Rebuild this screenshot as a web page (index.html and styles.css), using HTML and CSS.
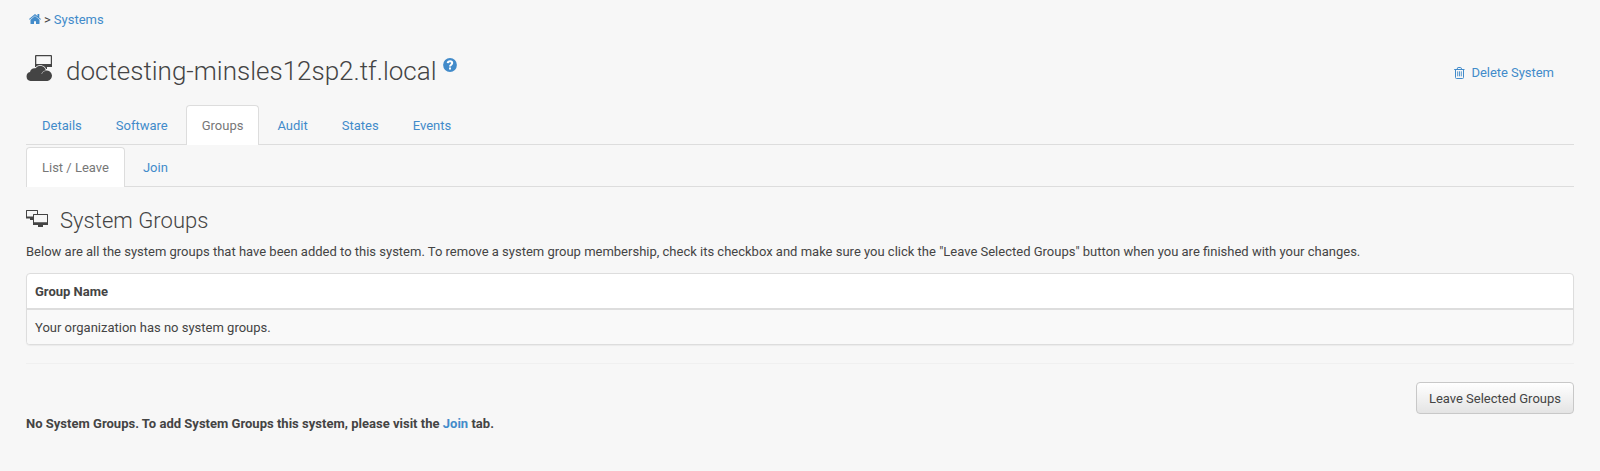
FILE: index.html
```
<!DOCTYPE html>
<html lang="en"><head><meta charset="utf-8"><title>System Groups</title><link rel="stylesheet" href="styles.css"></head>
<body>
<nav class="crumbs"><a href="#" class="home"><svg width="12" height="10" viewBox="0 0 12 10"><path d="M6 0 0 5.100l.6.7L6 1.400l5.400 4.400.6-.7-1.700-1.400V0H8.500v2.100zM6 2.100 1.500 5.800v3.700q0 .5.500.5h3V7.200h2V10h3q.5 0 .5-.5V5.800z" fill="currentColor"/></svg></a><span>&gt;</span><a href="#">Systems</a></nav>
<header class="head">
<svg class="sysicon" width="26" height="26" viewBox="0 0 26 26"><path d="M10 0h15q1 0 1 1v11H9V1q0-1 1-1zM10.300 1.200v7.800h14.500V1.200zM14 12h7v2h-7z" fill="#444" fill-rule="evenodd"/><path d="M4.500 26A4.600 4.600 0 0 1 4 17 5 5 0 0 1 9.500 13.300 5.700 5.700 0 0 1 19.800 15.500 5.200 5.200 0 0 1 21.500 26z" fill="#444" stroke="#f7f7f7" stroke-width="1.400" paint-order="stroke"/><path d="M15.500 19q1-3 4.300-3.500" fill="none" stroke="#ccc" stroke-width=".6"/></svg>
<h1>doctesting-minsles12sp2.tf.local</h1>
<svg class="help" width="14" height="14" viewBox="0 0 14 14"><circle cx="7" cy="7" r="6.900" fill="#428bca"/><path d="M4.700 5.200C5 2.700 9.200 2.800 9.200 5.100 9.200 6.700 7 6.700 7 8.600M7 9.600v1.900" stroke="#fff" stroke-width="2" fill="none"/></svg>
<a class="delete" href="#"><svg width="11" height="12" viewBox="0 0 11 12" fill="none" stroke="currentColor"><path d="M.2 2.500h10.300M3 2.500l.6-1.700q.1-.3.5-.3h2.500q.4 0 .5.3l.6 1.700M1.500 2.500v8q0 1 1 1h6q1 0 1-1v-8"/><path d="M3.700 4.300v5M5.500 4.300v5M7.300 4.300v5" stroke-width=".9"/></svg>Delete System</a>
</header>
<ul class="tabs main"><li>Details</li><li>Software</li><li class="on">Groups</li><li>Audit</li><li>States</li><li>Events</li></ul>
<ul class="tabs sub"><li class="on">List / Leave</li><li>Join</li></ul>
<h2><svg width="22" height="18" viewBox="0 0 22 18"><path d="M.5 0h11q.5 0 .5.500V4h-1V1H1v5.500h6V10H4V8.500H0V.5Q0 0 .5 0zM7.500 4h14q.5 0 .5.500V15h-5v2h-5v-2H7V4.500q0-.5.5-.5zM8 5v7.200h13V5z" fill="#444" fill-rule="evenodd"/></svg>System Groups</h2>
<p class="intro">Below are all the system groups that have been added to this system. To remove a system group membership, check its checkbox and make sure you click the "Leave Selected Groups" button when you are finished with your changes.</p>
<div class="panel"><div class="th">Group Name</div><div class="td">Your organization has no system groups.</div></div>
<hr>
<div class="actions"><button>Leave Selected Groups</button></div>
<p class="note">No System Groups. To add System Groups this system, please visit the <a href="#">Join</a> tab.</p>
</body></html>
```
FILE: styles.css
```
*{box-sizing:border-box}
body{margin:0;padding:0 26px;height:471px;background:#f7f7f7;color:#444;font:13px/20px Roboto,sans-serif;overflow:hidden}
a{color:#428bca;text-decoration:none}
.crumbs{display:flex;gap:3px;padding:10px 0 0 3px;height:50px}
.head{display:flex;height:55px;align-items:flex-start}
.sysicon{margin-top:5px}
h1{margin:4px 0 0 14px;font-size:26px;font-weight:300;line-height:34px}
.help{margin:8px 0 0 6px}
.delete{margin:13px 20px 0 auto;display:flex;align-items:center;gap:6px;letter-spacing:-.03px}
.delete svg{margin-top:-1px}
.tabs{display:flex;margin:0;padding:0;list-style:none;border-bottom:1px solid #ddd;gap:2px;color:#428bca}
.tabs li{height:40px;padding:10px 15px;border:1px solid transparent;border-bottom:0;border-radius:4px 4px 0 0;margin-bottom:-1px}
.tabs .on{background:#fff;border-color:#ddd;color:#777}
.main{height:40px}
.sub{height:40px;margin-top:2px}
h2{display:flex;align-items:center;gap:12px;margin:21px 0 0;font-size:22px;font-weight:300;line-height:26px;letter-spacing:.04px}
h2 svg{margin-top:-5px}
.intro{margin:8px 0 0}
.panel{margin-top:11px;border:1px solid #ddd;border-radius:4px;background:#fff;box-shadow:0 1px 1px rgba(0,0,0,.05)}
.th{height:36px;padding:8px;font-weight:700;border-bottom:2px solid #ddd}
.td{height:34px;padding:8px;line-height:20px;background:#f9f9f9;border-radius:0 0 3px 3px}
hr{margin:18px 0;border:0;border-top:1px solid #f0f0f0}
.actions{display:flex;justify-content:flex-end}
button{height:32px;padding:0 12px;border:1px solid #c8c8c8;border-radius:4px;background:linear-gradient(#fff,#e4e4e4);font:13px Roboto,sans-serif;color:#444}
.note{margin:0;font-weight:700;letter-spacing:.015px}
```
